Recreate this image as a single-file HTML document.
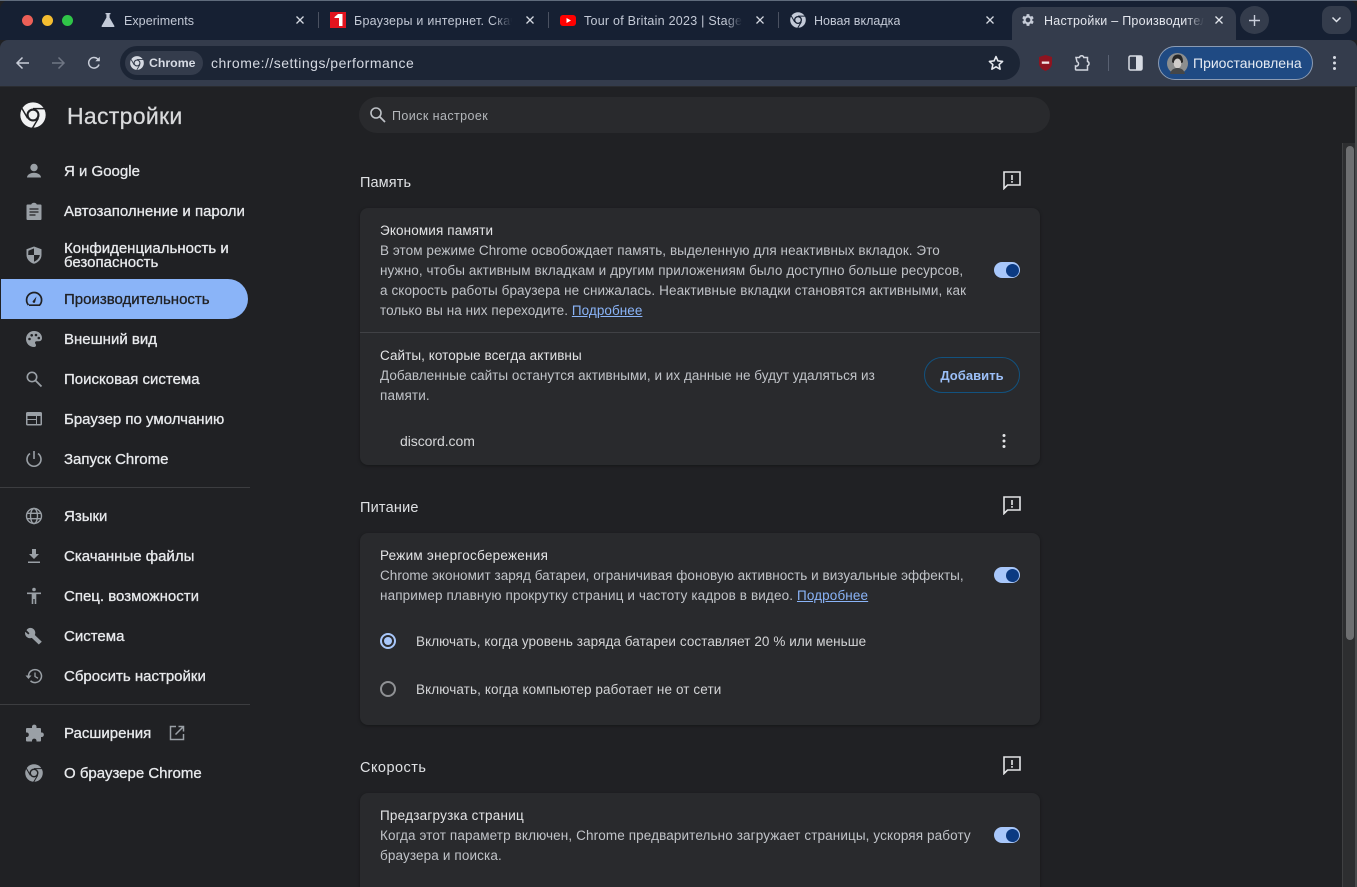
<!DOCTYPE html>
<html lang="ru"><head><meta charset="utf-8"><title>Настройки – Производительность</title>
<style>
*{box-sizing:border-box}
html,body{margin:0;padding:0;width:1357px;height:887px;overflow:hidden;background:#202124}
body{font-family:"Liberation Sans",sans-serif;position:relative}
.a{position:absolute}
.t{position:absolute;white-space:nowrap;line-height:20px;height:20px}
.tab{font-size:12.5px;color:#c3c9d6;letter-spacing:.25px;overflow:hidden;margin-top:1px}
.x{position:absolute;top:15px;width:10px;height:10px}
.sep{position:absolute;top:12px;width:1px;height:16px;background:#4a5161}
.n{font-size:15px;font-weight:400;color:#e8eaed;-webkit-text-stroke:.3px #e8eaed;margin-top:1px}
.b{font-size:13.5px;color:#c0c3c8;letter-spacing:.13px;margin-top:1px}
.h{font-size:13.5px;color:#e3e4e6;letter-spacing:.13px;margin-top:1px}
.s{font-size:14.5px;color:#dfe1e4;letter-spacing:.1px;margin-top:1px}
a{color:#8ab4f8;text-decoration:underline}
.card{position:absolute;left:360px;width:680px;background:#292a2d;border-radius:8px;box-shadow:0 1px 3px rgba(0,0,0,.35)}
.tog{position:absolute;left:994px;width:26px;height:16px;border-radius:8px;background:#a8c7fa}
.tog i{position:absolute;right:1px;top:1.500px;width:13px;height:13px;border-radius:50%;background:#0b3a82}
svg{position:absolute;display:block}
</style></head><body>

<!-- tab strip -->
<div class="a" style="left:0;top:0;width:1357px;height:40px;background:#162033;border-radius:10px 10px 0 0"></div>
<div class="a" style="left:0;top:0;width:1357px;height:1px;background:#5f6b7c"></div>
<div class="a" style="left:22px;top:15px;width:11px;height:11px;border-radius:50%;background:#ec5f57"></div>
<div class="a" style="left:42px;top:15px;width:11px;height:11px;border-radius:50%;background:#f4bd30"></div>
<div class="a" style="left:62px;top:15px;width:11px;height:11px;border-radius:50%;background:#2fc548"></div>

<svg style="left:101px;top:13px" width="14" height="14" viewBox="0 0 14 14"><path d="M4.500 0h5v1.200H8.600v3.400L13.400 13a.7.7 0 0 1-.6 1H1.200a.7.7 0 0 1-.6-1l4.800-8.400V1.200H4.500z" fill="#c3cad8"/></svg>
<div class="t tab" style="left:124px;top:10px;letter-spacing:.05px">Experiments</div>
<svg class="x" style="left:295px" viewBox="0 0 10 10"><path d="M1.500 1.500l7 7M8.500 1.500l-7 7" stroke="#d5d9e2" stroke-width="1.300"/></svg>
<div class="sep" style="left:318px"></div>

<div class="a" style="left:330px;top:12px;width:16px;height:16px;background:#e2131e"></div>
<svg style="left:330px;top:12px" width="16" height="16" viewBox="0 0 16 16"><path d="M8 2h4.500v12H9V6H4.500V5z" fill="#fff"/></svg>
<div class="t tab" style="left:354px;top:10px;width:158px">Браузеры и интернет. Скачать</div>
<div class="a" style="left:494px;top:10px;width:18px;height:20px;background:linear-gradient(90deg,rgba(22,32,51,0),#162033)"></div>
<svg class="x" style="left:525px" viewBox="0 0 10 10"><path d="M1.500 1.500l7 7M8.500 1.500l-7 7" stroke="#d5d9e2" stroke-width="1.300"/></svg>
<div class="sep" style="left:548px"></div>

<div class="a" style="left:560px;top:15px;width:16px;height:11px;background:#f00;border-radius:3px"></div>
<svg style="left:560px;top:15px" width="16" height="11" viewBox="0 0 16 11"><path d="M6.500 3l4.500 2.500L6.500 8z" fill="#fff"/></svg>
<div class="t tab" style="left:584px;top:10px;width:158px">Tour of Britain 2023 | Stage 1</div>
<div class="a" style="left:726px;top:10px;width:16px;height:20px;background:linear-gradient(90deg,rgba(22,32,51,0),#162033)"></div>
<svg class="x" style="left:755px" viewBox="0 0 10 10"><path d="M1.500 1.500l7 7M8.500 1.500l-7 7" stroke="#d5d9e2" stroke-width="1.300"/></svg>
<div class="sep" style="left:778px"></div>

<svg style="left:790px;top:12px" width="16" height="16" viewBox="0 0 16 16"><circle cx="8" cy="8" r="7.800" fill="#c3cad8"/><circle cx="8" cy="8" r="4" fill="#162033"/><circle cx="8" cy="8" r="2.700" fill="#c3cad8"/><path d="M8 4.100h7M4.700 10l-3.400-6M11.300 10l-3.500 5.800" stroke="#162033" stroke-width="1"/></svg>
<div class="t tab" style="left:814px;top:10px;letter-spacing:.02px">Новая вкладка</div>
<svg class="x" style="left:985px" viewBox="0 0 10 10"><path d="M1.500 1.500l7 7M8.500 1.500l-7 7" stroke="#d5d9e2" stroke-width="1.300"/></svg>

<!-- toolbar + active tab -->
<div class="a" style="left:0;top:40px;width:1357px;height:47px;background:#343c4c;border-radius:8px 8px 0 0"></div>
<div class="a" style="left:1012px;top:7px;width:224px;height:34px;background:#343c4c;border-radius:10px 10px 0 0"></div>
<svg style="left:1020px;top:12px" width="16" height="16" viewBox="0 0 24 24"><path fill="#c6ccd8" d="M19.400 13a7.600 7.600 0 0 0 0-2l2.100-1.600-2-3.500-2.500 1a7.500 7.500 0 0 0-1.700-1L15 3.200h-4l-.4 2.700a7.500 7.500 0 0 0-1.700 1l-2.500-1-2 3.500L6.500 11a7.600 7.600 0 0 0 0 2l-2.100 1.600 2 3.500 2.500-1a7.500 7.500 0 0 0 1.700 1l.4 2.700h4l.4-2.700a7.500 7.500 0 0 0 1.700-1l2.500 1 2-3.500zM13 15.500a3.500 3.500 0 1 1 0-7 3.500 3.500 0 0 1 0 7z" transform="translate(-1 0)"/></svg>
<div class="t tab" style="left:1044px;top:10px;width:160px;color:#e4e7ee">Настройки – Производительность</div>
<div class="a" style="left:1186px;top:10px;width:18px;height:20px;background:linear-gradient(90deg,rgba(52,60,76,0),#343c4c)"></div>
<svg class="x" style="left:1214px" viewBox="0 0 10 10"><path d="M1.500 1.500l7 7M8.500 1.500l-7 7" stroke="#e4e7ee" stroke-width="1.300"/></svg>

<div class="a" style="left:1240px;top:6px;width:29px;height:28px;border-radius:50%;background:#343c4c"></div>
<svg style="left:1248px;top:14px" width="13" height="13" viewBox="0 0 13 13"><path d="M6.500 1v11M1 6.500h11" stroke="#c9ceda" stroke-width="1.400"/></svg>
<div class="a" style="left:1322px;top:6px;width:29px;height:28px;border-radius:9px;background:#343c4c"></div>
<svg style="left:1331px;top:16px" width="11" height="8" viewBox="0 0 11 8"><path d="M1.500 1.500l4 4 4-4" stroke="#dfe3ea" stroke-width="1.500" fill="none"/></svg>

<!-- nav icons -->
<svg style="left:14px;top:55px" width="18" height="16" viewBox="0 0 18 16"><path d="M15 8H3.500M8.500 2.500L3 8l5.500 5.500" stroke="#c8cdd8" stroke-width="1.500" fill="none"/></svg>
<svg style="left:49px;top:55px" width="18" height="16" viewBox="0 0 18 16"><path d="M3 8h11.500M9.500 2.500L15 8l-5.500 5.500" stroke="#6f7684" stroke-width="1.500" fill="none"/></svg>
<svg style="left:86px;top:55px" width="16" height="16" viewBox="0 0 16 16"><path d="M13 9.500A5.300 5.300 0 1 1 11.700 4L13.500 5.500" stroke="#c8cdd8" stroke-width="1.500" fill="none"/><path d="M13.800 1.800v4.500H9.300z" fill="#c8cdd8"/></svg>

<!-- omnibox -->
<div class="a" style="left:120px;top:46px;width:900px;height:34px;border-radius:17px;background:#1c2535"></div>
<div class="a" style="left:125px;top:51px;width:78px;height:24px;border-radius:12px;background:#343c4c"></div>
<svg style="left:130px;top:56px" width="14" height="14" viewBox="0 0 16 16"><circle cx="8" cy="8" r="7.800" fill="#d5d9e2"/><circle cx="8" cy="8" r="4" fill="#343c4c"/><circle cx="8" cy="8" r="2.700" fill="#d5d9e2"/><path d="M8 4.100h7M4.700 10l-3.400-6M11.300 10l-3.500 5.800" stroke="#343c4c" stroke-width="1"/></svg>
<div class="t" style="left:149px;top:53px;font-size:12.300px;font-weight:700;color:#d7dbe4">Chrome</div>
<div class="t" style="left:211px;top:53px;font-size:14px;color:#d5d9e2;letter-spacing:.49px">chrome://settings/performance</div>
<svg style="left:987px;top:54px" width="18" height="18" viewBox="0 0 24 24"><path d="M12 3.500l2.600 5.700 6.200.7-4.600 4.200 1.300 6.100L12 17.100l-5.500 3.100 1.300-6.100-4.600-4.200 6.200-.7z" fill="none" stroke="#e6e9ef" stroke-width="2.100" stroke-linejoin="round"/></svg>

<!-- extensions -->
<svg style="left:1038px;top:54px" width="15" height="18" viewBox="0 0 15 18"><path d="M7.500 1L14 3v6.500c0 3.500-3 6-6.500 7.500C4 15.500 1 13 1 9.500V3z" fill="#8e1420"/><rect x="3.800" y="7.500" width="7.400" height="2.300" fill="#f1e6e6"/></svg>
<svg style="left:1073px;top:53px" width="19" height="19" viewBox="0 0 19 19"><path d="M3 4.500h3.500a2.200 2.200 0 0 1 4.300 0h3.700v4a2.200 2.200 0 0 1 0 4.200v4.300H3.500a1 1 0 0 1-1-1V13a2 2 0 0 0 1.500-4.300z" fill="none" stroke="#d2d6df" stroke-width="1.500"/></svg>
<div class="a" style="left:1108px;top:55px;width:1px;height:16px;background:#596172"></div>
<svg style="left:1128px;top:55px" width="15" height="16" viewBox="0 0 15 16"><rect x="1" y="1" width="13" height="14" rx="1.500" fill="none" stroke="#d8dce4" stroke-width="1.500"/><rect x="8" y="1" width="6" height="14" fill="#d8dce4"/></svg>

<!-- profile -->
<div class="a" style="left:1158px;top:46px;width:155px;height:34px;border-radius:17px;background:#1f4a83;border:1px solid #8b9bb3"></div>
<svg style="left:1167px;top:53px" width="21" height="21" viewBox="0 0 21 21"><circle cx="10.500" cy="10.500" r="10.500" fill="#8c8e8e"/><path d="M5 9c0-6 3-7.500 6-7.500s5 2 5 7.500l-1 1H6z" fill="#262626"/><ellipse cx="10.500" cy="10.500" rx="3.800" ry="5" fill="#cfccc9"/><path d="M3 21c1-5 5-6 7.500-6s6.500 1 7.500 6z" fill="#454748"/></svg>
<div class="t" style="left:1193px;top:53px;font-size:14px;color:#e6ebf3;letter-spacing:0">Приостановлена</div>
<svg style="left:1332px;top:55px" width="5" height="16" viewBox="0 0 5 16"><circle cx="2.500" cy="2.500" r="1.500" fill="#d8dce4"/><circle cx="2.500" cy="8" r="1.500" fill="#d8dce4"/><circle cx="2.500" cy="13.500" r="1.500" fill="#d8dce4"/></svg>

<!-- page top border -->
<div class="a" style="left:0;top:86px;width:1357px;height:1px;background:#2a2c30"></div>

<!-- sidebar -->
<svg style="left:20px;top:102px" width="26" height="26" viewBox="0 0 16 16"><circle cx="8" cy="8" r="7.800" fill="#f1f2f3"/><circle cx="8" cy="8" r="4" fill="#202124"/><circle cx="8" cy="8" r="2.700" fill="#f1f2f3"/><path d="M8 4.100h7.500M4.700 10l-3.700-6.400M11.300 10l-3.700 6.200" stroke="#202124" stroke-width=".9"/></svg>
<div class="t" style="left:67px;top:102px;height:28px;line-height:28px;font-size:23px;color:#d9dadc;letter-spacing:.3px;-webkit-text-stroke:.25px #d9dadc">Настройки</div>

<svg style="left:25px;top:162px" width="18" height="18" viewBox="0 0 18 18"><circle cx="9" cy="5.500" r="3.700" fill="#9aa0a6"/><path d="M2 15.500c0-3.200 4.500-4.700 7-4.700s7 1.500 7 4.700z" fill="#9aa0a6" /></svg>
<div class="t n" style="left:64px;top:161px">Я и Google</div>

<svg style="left:25px;top:202px" width="18" height="18" viewBox="0 0 18 18"><path d="M2.500 2.500h3.700c.3-1 1.500-1.700 2.800-1.700s2.500.7 2.800 1.700h3.700a1 1 0 0 1 1 1V17a1 1 0 0 1-1 1h-13a1 1 0 0 1-1-1V3.500a1 1 0 0 1 1-1z" fill="#9aa0a6"/><path d="M4.500 7h9M4.500 10h9M4.500 13h6" stroke="#202124" stroke-width="1.300"/></svg>
<div class="t n" style="left:64px;top:201px">Автозаполнение и пароли</div>

<svg style="left:25px;top:246px" width="18" height="18" viewBox="0 0 18 18"><path d="M9 .5l7.500 2.800V9c0 4.200-3.200 7.500-7.500 8.800C4.700 16.500 1.500 13.200 1.500 9V3.300z" fill="#9aa0a6"/><path d="M9 2.400V9H3.200c0 0 .2-4 .2-4.200zM9 9h5.800c-.3 3-2.800 5.600-5.800 6.800z" fill="#202124"/></svg>
<div class="t n" style="left:64px;top:241px;line-height:14px;height:auto">Конфиденциальность и<br>безопасность</div>

<div class="a" style="left:1px;top:279px;width:247px;height:40px;border-radius:0 20px 20px 0;background:#8ab4f8"></div>
<svg style="left:25px;top:290px" width="18" height="18" viewBox="0 0 18 18"><path d="M4 15.200h10.500A7.500 7.500 0 1 0 3.500 15" fill="none" stroke="#202124" stroke-width="1.700"/><path d="M7.500 11.500l4-5-1.500 6a1.500 1.500 0 0 1-2.500-1z" fill="#202124"/></svg>
<div class="t n" style="left:64px;top:289px;color:#202124;-webkit-text-stroke:.3px #202124">Производительность</div>

<svg style="left:25px;top:330px" width="18" height="18" viewBox="0 0 18 18"><path d="M9 1C4.500 1 1 4.500 1 9s3.500 8 8 8c1.500 0 2-1 2-1.800 0-1.200-1-1.500-1-2.500 0-.9.700-1.500 1.700-1.500H14c2 0 3-1.500 3-3.200C17 4 13.500 1 9 1z" fill="#9aa0a6"/><circle cx="4.500" cy="9" r="1.300" fill="#202124"/><circle cx="6.700" cy="5.300" r="1.300" fill="#202124"/><circle cx="11" cy="5" r="1.300" fill="#202124"/><circle cx="13.800" cy="8" r="1.300" fill="#202124"/></svg>
<div class="t n" style="left:64px;top:329px">Внешний вид</div>

<svg style="left:25px;top:370px" width="18" height="18" viewBox="0 0 18 18"><circle cx="7" cy="7" r="4.700" fill="none" stroke="#9aa0a6" stroke-width="1.600"/><path d="M10.500 10.500l6 6" stroke="#9aa0a6" stroke-width="1.800"/></svg>
<div class="t n" style="left:64px;top:369px">Поисковая система</div>

<svg style="left:25px;top:410px" width="18" height="18" viewBox="0 0 18 18"><rect x="1" y="2" width="16" height="13.500" rx="1.500" fill="#9aa0a6"/><rect x="2.500" y="6" width="8.500" height="3" fill="#202124"/><rect x="2.500" y="10" width="8.500" height="4" fill="#202124"/><rect x="12" y="6" width="3.500" height="8" fill="#202124"/></svg>
<div class="t n" style="left:64px;top:409px">Браузер по умолчанию</div>

<svg style="left:25px;top:450px" width="18" height="18" viewBox="0 0 18 18"><path d="M9 1v8" stroke="#9aa0a6" stroke-width="1.600"/><path d="M5 3.500a7 7 0 1 0 8 0" fill="none" stroke="#9aa0a6" stroke-width="1.600"/></svg>
<div class="t n" style="left:64px;top:449px">Запуск Chrome</div>

<div class="a" style="left:0;top:487px;width:250px;height:1px;background:#3c3d40"></div>

<svg style="left:25px;top:507px" width="18" height="18" viewBox="0 0 18 18"><g fill="none" stroke="#9aa0a6" stroke-width="1.400"><circle cx="9" cy="9" r="7.500"/><ellipse cx="9" cy="9" rx="3.500" ry="7.500"/><path d="M2 6.300h14M2 11.700h14"/></g></svg>
<div class="t n" style="left:64px;top:506px">Языки</div>

<svg style="left:25px;top:547px" width="18" height="18" viewBox="0 0 18 18"><path d="M7 2h4v5h3l-5 5-5-5h3zM3 14.500h12V16H3z" fill="#9aa0a6"/></svg>
<div class="t n" style="left:64px;top:546px">Скачанные файлы</div>

<svg style="left:25px;top:587px" width="18" height="18" viewBox="0 0 18 18"><circle cx="9" cy="2.500" r="1.800" fill="#9aa0a6"/><path d="M2 5.500h14v1.600h-4.700V17H9.700v-5H8.300v5H6.700V7.100H2z" fill="#9aa0a6"/></svg>
<div class="t n" style="left:64px;top:586px">Спец. возможности</div>

<svg style="left:25px;top:627px" width="19" height="18" viewBox="0 0 19 18"><path d="M6.500 1a4.800 4.800 0 0 0-5 2.200l3 3L3.300 7.500l-3-2.800a5 5 0 0 0 6.500 6.200l7 6.600 3-2.800-7-6.700A5 5 0 0 0 6.500 1z" fill="#9aa0a6"/></svg>
<div class="t n" style="left:64px;top:626px">Система</div>

<svg style="left:25px;top:667px" width="18" height="18" viewBox="0 0 18 18"><path d="M3.500 9a6.500 6.500 0 1 1 2 4.800" fill="none" stroke="#9aa0a6" stroke-width="1.500"/><path d="M.5 8.500h6L3.500 12z" fill="#9aa0a6"/><path d="M10 5.500v4l3 1.800" fill="none" stroke="#9aa0a6" stroke-width="1.300"/></svg>
<div class="t n" style="left:64px;top:666px">Сбросить настройки</div>

<div class="a" style="left:0;top:704px;width:250px;height:1px;background:#3c3d40"></div>

<svg style="left:25px;top:724px" width="19" height="18" viewBox="0 0 19 18"><path d="M7 2.500a2.300 2.300 0 0 1 4.500 0V4H15a1 1 0 0 1 1 1v3.500h1a2.300 2.300 0 0 1 0 4.500h-1v3.500a1 1 0 0 1-1 1h-3.500v-1a2.300 2.300 0 0 0-4.500 0v1H2a1 1 0 0 1-1-1V13h1a2.300 2.300 0 0 0 0-4.500H1V5a1 1 0 0 1 1-1h5z" fill="#9aa0a6"/></svg>
<div class="t n" style="left:64px;top:723px">Расширения</div>
<svg style="left:169px;top:725px" width="16" height="16" viewBox="0 0 16 16"><path d="M7 1.500H1.500v13h13V9M6.500 9.500L14 2M9.500 1.500h5v5" fill="none" stroke="#9aa0a6" stroke-width="1.500"/></svg>

<svg style="left:25px;top:764px" width="18" height="18" viewBox="0 0 16 16"><circle cx="8" cy="8" r="7.800" fill="#9aa0a6"/><circle cx="8" cy="8" r="4" fill="#202124"/><circle cx="8" cy="8" r="2.700" fill="#9aa0a6"/><path d="M8 4.100h7.500M4.700 10l-3.700-6.400M11.300 10l-3.700 6.200" stroke="#202124" stroke-width=".9"/></svg>
<div class="t n" style="left:64px;top:763px">О браузере Chrome</div>

<!-- search -->
<div class="a" style="left:359px;top:97px;width:691px;height:36px;border-radius:18px;background:#292a2d"></div>
<svg style="left:369px;top:106px" width="17" height="17" viewBox="0 0 17 17"><circle cx="7" cy="7" r="5" fill="none" stroke="#bdc1c6" stroke-width="1.600"/><path d="M10.500 10.500l5.500 5.500" stroke="#bdc1c6" stroke-width="1.800"/></svg>
<div class="t" style="left:392px;top:106px;font-size:12.500px;color:#b4b7bb;letter-spacing:.42px">Поиск настроек</div>

<!-- Память -->
<div class="t s" style="left:360px;top:172px">Память</div>
<svg style="left:1002px;top:170px" width="20" height="20" viewBox="0 0 20 20"><path d="M2 2h16v13H5.500L2 18.500z" fill="none" stroke="#e4e5e7" stroke-width="1.600"/><path d="M9.200 5h1.600v5H9.200zM9.200 11h1.600v1.700H9.200z" fill="#e4e5e7"/></svg>

<div class="card" style="top:208px;height:257px"></div>
<div class="t h" style="left:380px;top:220px">Экономия памяти</div>
<div class="t b" style="left:380px;top:240px;letter-spacing:.07px">В этом режиме Chrome освобождает память, выделенную для неактивных вкладок. Это</div>
<div class="t b" style="left:380px;top:260px;letter-spacing:.1px">нужно, чтобы активным вкладкам и другим приложениям было доступно больше ресурсов,</div>
<div class="t b" style="left:380px;top:280px;letter-spacing:.095px">а скорость работы браузера не снижалась. Неактивные вкладки становятся активными, как</div>
<div class="t b" style="left:380px;top:300px;letter-spacing:.06px">только вы на них переходите. <a>Подробнее</a></div>
<div class="tog" style="top:262px"><i></i></div>
<div class="a" style="left:360px;top:332px;width:680px;height:1px;background:#404145"></div>
<div class="t h" style="left:380px;top:345px;letter-spacing:.06px">Сайты, которые всегда активны</div>
<div class="t b" style="left:380px;top:365px;letter-spacing:.035px">Добавленные сайты останутся активными, и их данные не будут удаляться из</div>
<div class="t b" style="left:380px;top:385px">памяти.</div>
<div class="a" style="left:924px;top:357px;width:96px;height:36px;border-radius:18px;border:1px solid #12527f"></div>
<div class="t" style="left:924px;top:366px;width:96px;text-align:center;font-size:13px;font-weight:700;color:#9cc0f9;letter-spacing:.05px">Добавить</div>
<div class="t" style="left:400px;top:431px;font-size:14px;color:#d6d7d9;letter-spacing:-.06px">discord.com</div>
<svg style="left:1001px;top:433px" width="6" height="16" viewBox="0 0 6 16"><circle cx="3" cy="2.500" r="1.500" fill="#e4e5e7"/><circle cx="3" cy="8" r="1.500" fill="#e4e5e7"/><circle cx="3" cy="13.500" r="1.500" fill="#e4e5e7"/></svg>

<!-- Питание -->
<div class="t s" style="left:360px;top:497px;letter-spacing:.2px">Питание</div>
<svg style="left:1002px;top:495px" width="20" height="20" viewBox="0 0 20 20"><path d="M2 2h16v13H5.500L2 18.500z" fill="none" stroke="#e4e5e7" stroke-width="1.600"/><path d="M9.200 5h1.600v5H9.200zM9.200 11h1.600v1.700H9.200z" fill="#e4e5e7"/></svg>

<div class="card" style="top:533px;height:192px"></div>
<div class="t h" style="left:380px;top:545px;letter-spacing:.26px">Режим энергосбережения</div>
<div class="t b" style="left:380px;top:565px;letter-spacing:.035px">Chrome экономит заряд батареи, ограничивая фоновую активность и визуальные эффекты,</div>
<div class="t b" style="left:380px;top:585px">например плавную прокрутку страниц и частоту кадров в видео. <a>Подробнее</a></div>
<div class="tog" style="top:567px"><i></i></div>

<div class="a" style="left:380px;top:633px;width:16px;height:16px;border-radius:50%;border:2px solid #a8c7fa"></div>
<div class="a" style="left:384px;top:637px;width:8px;height:8px;border-radius:50%;background:#a8c7fa"></div>
<div class="t b" style="left:416px;top:631px;color:#d3d4d6;letter-spacing:.07px">Включать, когда уровень заряда батареи составляет 20 % или меньше</div>
<div class="a" style="left:380px;top:681px;width:16px;height:16px;border-radius:50%;border:2px solid #8f9194"></div>
<div class="t b" style="left:416px;top:679px;color:#d3d4d6;letter-spacing:.11px">Включать, когда компьютер работает не от сети</div>

<!-- Скорость -->
<div class="t s" style="left:360px;top:757px;letter-spacing:.47px">Скорость</div>
<svg style="left:1002px;top:755px" width="20" height="20" viewBox="0 0 20 20"><path d="M2 2h16v13H5.500L2 18.500z" fill="none" stroke="#e4e5e7" stroke-width="1.600"/><path d="M9.200 5h1.600v5H9.200zM9.200 11h1.600v1.700H9.200z" fill="#e4e5e7"/></svg>

<div class="card" style="top:793px;height:110px"></div>
<div class="t h" style="left:380px;top:805px;letter-spacing:.23px">Предзагрузка страниц</div>
<div class="t b" style="left:380px;top:825px;letter-spacing:.12px">Когда этот параметр включен, Chrome предварительно загружает страницы, ускоряя работу</div>
<div class="t b" style="left:380px;top:845px">браузера и поиска.</div>
<div class="tog" style="top:827px"><i></i></div>

<!-- scrollbar -->
<div class="a" style="left:1342px;top:143px;width:15px;height:744px;background:#2d2e30;border-left:1px solid #3f4042"></div>
<div class="a" style="left:1346px;top:146px;width:8px;height:494px;border-radius:4px;background:#6e6f71"></div>
<div class="a" style="left:1355px;top:87px;width:2px;height:800px;background:#4a4b4d"></div>
</body></html>
